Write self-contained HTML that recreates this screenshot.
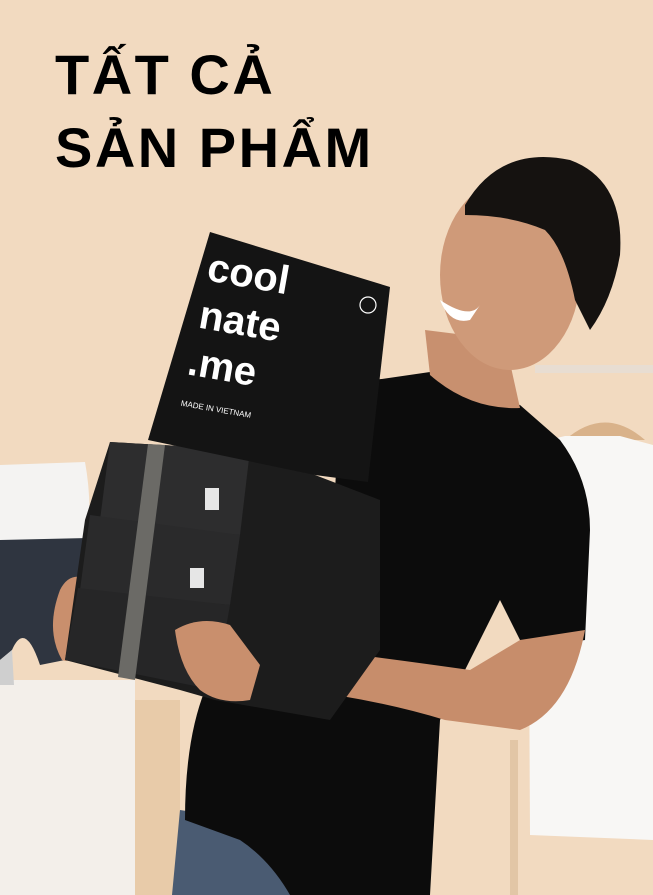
<!DOCTYPE html>
<html><head><meta charset="utf-8"><style>
html,body{margin:0;padding:0;}
body{width:653px;height:895px;overflow:hidden;position:relative;background:#f3dcc2;font-family:"Liberation Sans",sans-serif;}
svg{position:absolute;left:0;top:0;}
h1{position:absolute;left:55px;top:38px;margin:0;font-size:56px;line-height:73px;font-weight:700;color:#000;letter-spacing:2.5px;}
</style></head><body>
<svg width="653" height="895" viewBox="0 0 653 895">
<rect width="653" height="895" fill="#f2dac0"/>
<!-- rack -->
<rect x="535" y="365" width="118" height="8" fill="#e8ddd2"/>
<path d="M565 440 Q605 405 645 440 Z" fill="#d9b28a"/>
<path d="M528 445 L565 436 L620 436 L653 445 L653 840 L530 835 Z" fill="#f8f7f5"/>
<rect x="510" y="740" width="8" height="155" fill="#e2c6a6"/>
<!-- pedestal & mannequin -->
<rect x="0" y="680" width="135" height="215" fill="#f3efea"/>
<rect x="135" y="700" width="45" height="195" fill="#e8cba9"/>
<path d="M0 465 L85 462 Q92 500 88 540 L0 545 Z" fill="#f4f3f2"/>
<path d="M0 540 L88 538 L90 600 Q80 640 65 660 L40 665 Q25 620 12 650 L0 660 Z" fill="#2f3540"/>
<path d="M0 660 L12 650 L14 685 L0 685 Z" fill="#cfcfcf"/>
<!-- jeans -->
<path d="M180 810 L310 830 L300 895 L172 895 Z" fill="#4a5b72"/>
<!-- shirt -->
<path d="M340 385 L430 372 Q475 395 520 405 L560 440 Q590 480 590 530 L585 640 L525 650 L500 600 L440 720 L430 895 L290 895 Q270 860 240 840 L185 820 Q185 740 205 690 L330 600 Z" fill="#0c0c0c"/>
<!-- neck / head -->
<path d="M425 330 L505 340 L520 408 Q470 410 430 375 Z" fill="#c8906f"/>
<ellipse cx="510" cy="275" rx="70" ry="95" fill="#cf9a79"/>
<path d="M465 205 Q500 145 570 160 Q625 180 620 255 Q612 300 590 330 L575 300 Q565 250 545 230 Q510 215 465 215 Z" fill="#151210"/>
<path d="M440 300 Q470 320 480 305 L470 320 Q450 325 440 300 Z" fill="#fff"/>
<!-- arms -->
<path d="M520 640 L585 630 Q570 710 520 730 L445 720 Q380 700 300 690 Q270 690 250 670 L320 650 Q400 660 470 670 Z" fill="#c78d6b"/>
<path d="M60 590 Q70 570 90 580 L85 640 Q75 665 62 660 Q45 630 60 590 Z" fill="#c98f6d"/>
<!-- lower boxes -->
<path d="M110 442 L250 450 L380 500 L380 650 L330 720 L215 700 L180 690 L65 660 L85 520 Z" fill="#1c1c1c"/>
<path d="M110 442 L250 450 L240 535 L100 520 Z" fill="#2d2d2e"/>
<path d="M90 515 L240 535 L230 605 L80 590 Z" fill="#2a2a2b"/>
<path d="M78 588 L230 605 L215 690 L65 660 Z" fill="#262627"/>
<path d="M148 444 L165 445 L135 680 L118 677 Z" fill="#6b6a66"/>
<rect x="205" y="488" width="14" height="22" fill="#e6e6e6"/>
<rect x="190" y="568" width="14" height="20" fill="#e6e6e6"/>
<path d="M175 630 Q200 615 230 625 L260 665 L250 700 Q220 705 200 690 Q180 670 175 630 Z" fill="#c98f6d"/>
<!-- top box -->
<path d="M210 232 L390 287 L368 482 L315 475 L148 440 Z" fill="#141414"/>
</svg>
<svg width="653" height="895" viewBox="0 0 653 895">
<g transform="rotate(10 270 330)" fill="#fff" font-family="Liberation Sans, sans-serif" font-weight="700" font-size="40">
<text x="198" y="292">cool</text>
<text x="198" y="340">nate</text>
<text x="195" y="388">.me</text>
<text x="195" y="420" font-size="8" font-weight="400">MADE IN VIETNAM</text>
</g>
<circle cx="368" cy="305" r="8" fill="none" stroke="#fff" stroke-width="1.2"/>
</svg>
<h1>TẤT CẢ<br>SẢN PHẨM</h1>
</body></html>
